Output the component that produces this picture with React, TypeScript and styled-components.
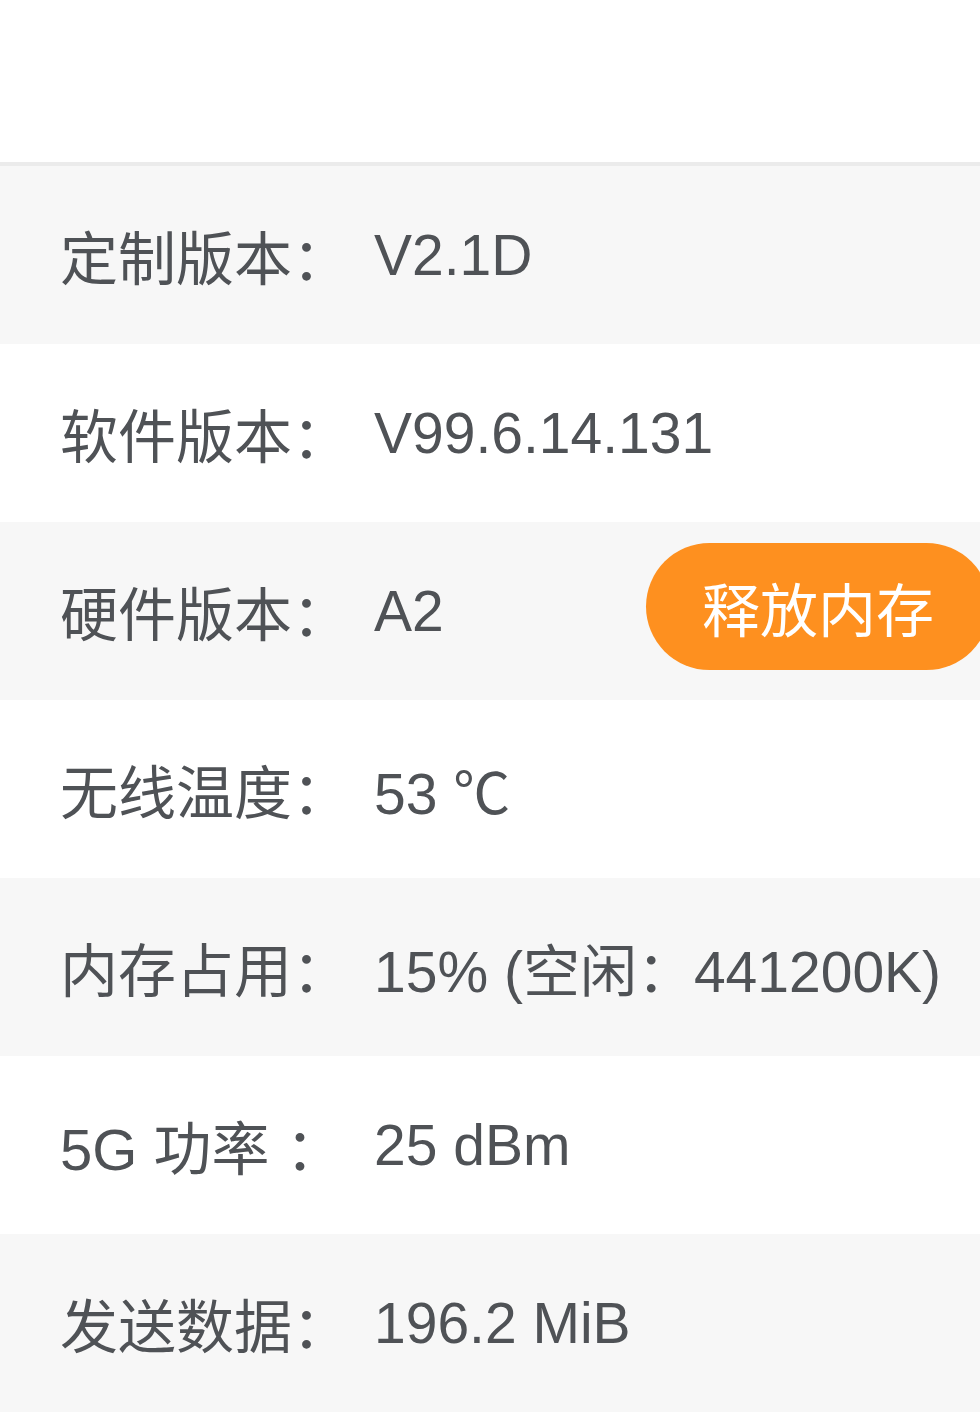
import React from "react";
import styled, { createGlobalStyle } from "styled-components";

const GlobalStyle = createGlobalStyle`
  html, body {
    margin: 0;
    padding: 0;
    background: #ffffff;
    overflow: hidden;
  }
  * { box-sizing: border-box; }
`;

const Page = styled.div`
  width: 980px;
  font-family: "Liberation Sans", "Noto Sans CJK SC", sans-serif;
  color: #4f5256;
  overflow: hidden;
`;

const TopBar = styled.div`
  height: 166px;
  background: #ffffff;
  border-bottom: 4px solid #ebebeb;
`;

const Row = styled.div<{ $shaded: boolean }>`
  height: 178px;
  display: flex;
  align-items: center;
  padding-left: 60px;
  background: ${(p) => (p.$shaded ? "#f7f7f7" : "#ffffff")};
  font-size: 58px;
  white-space: nowrap;
`;

const Label = styled.span`
  flex: 0 0 314px;
`;

const Value = styled.span`
  flex: 0 0 auto;
  font-size: 57px;
`;

const ActionButton = styled.button`
  margin-left: auto;
  margin-right: -10px;
  margin-bottom: 9px;
  flex: 0 0 344px;
  height: 127px;
  border: none;
  border-radius: 64px;
  background: #fe901f;
  color: #ffffff;
  font-family: "Noto Sans CJK SC", sans-serif;
  font-size: 58px;
  text-align: left;
  padding: 0 0 0 56px;
  cursor: pointer;
`;

const rows: { label: string; value: string; action?: string }[] = [
  { label: "定制版本：", value: "V2.1D" },
  { label: "软件版本：", value: "V99.6.14.131" },
  { label: "硬件版本：", value: "A2", action: "释放内存" },
  { label: "无线温度：", value: "53 ℃" },
  { label: "内存占用：", value: "15% (空闲：441200K)" },
  { label: "5G 功率 ：", value: "25 dBm" },
  { label: "发送数据：", value: "196.2 MiB" },
];

export default function App() {
  return (
    <>
      <GlobalStyle />
      <Page>
        <TopBar />
        {rows.map((r, i) => (
          <Row key={r.label} $shaded={i % 2 === 0}>
            <Label>{r.label}</Label>
            <Value>{r.value}</Value>
            {r.action && <ActionButton>{r.action}</ActionButton>}
          </Row>
        ))}
      </Page>
    </>
  );
}
